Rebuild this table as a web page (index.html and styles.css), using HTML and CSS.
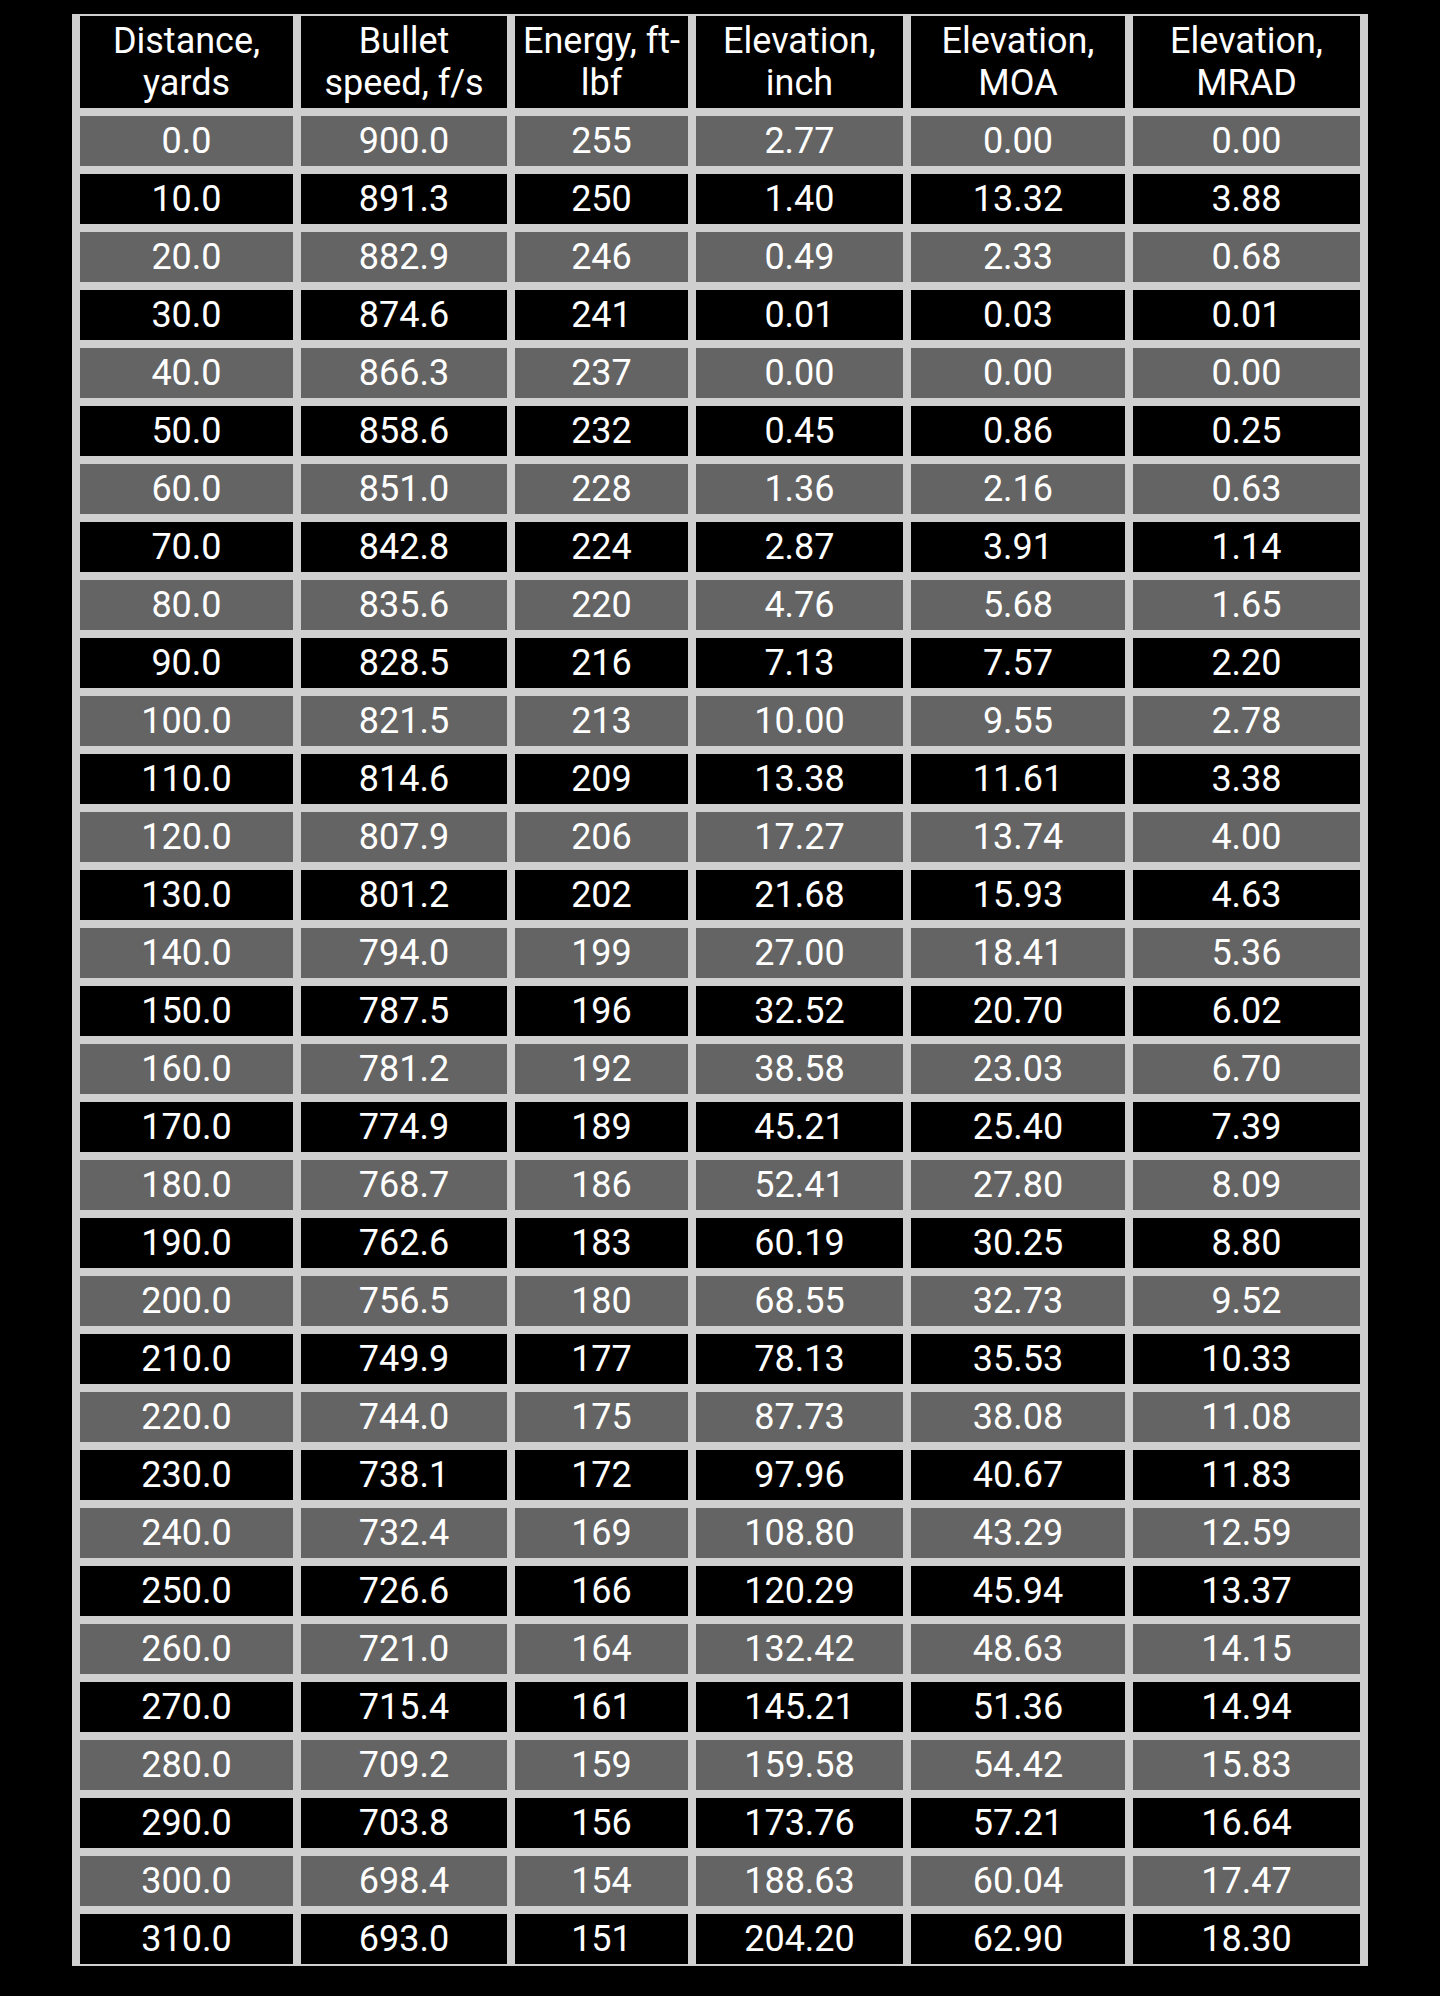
FILE: index.html
```html
<!DOCTYPE html>
<html lang="en">
<head>
<meta charset="utf-8">
<title>Ballistic table</title>
<link rel="stylesheet" href="styles.css">
</head>
<body>
<div class="table" id="table">
  <div class="cell head">Distance,<br>yards</div>
  <div class="cell head">Bullet<br>speed, f/s</div>
  <div class="cell head">Energy, ft-<br>lbf</div>
  <div class="cell head">Elevation,<br>inch</div>
  <div class="cell head">Elevation,<br>MOA</div>
  <div class="cell head">Elevation,<br>MRAD</div>
</div>
<script src="app.js"></script>
</body>
</html>
```
FILE: app.js
```js
const rows = [
["0.0","900.0","255","2.77","0.00","0.00"],
["10.0","891.3","250","1.40","13.32","3.88"],
["20.0","882.9","246","0.49","2.33","0.68"],
["30.0","874.6","241","0.01","0.03","0.01"],
["40.0","866.3","237","0.00","0.00","0.00"],
["50.0","858.6","232","0.45","0.86","0.25"],
["60.0","851.0","228","1.36","2.16","0.63"],
["70.0","842.8","224","2.87","3.91","1.14"],
["80.0","835.6","220","4.76","5.68","1.65"],
["90.0","828.5","216","7.13","7.57","2.20"],
["100.0","821.5","213","10.00","9.55","2.78"],
["110.0","814.6","209","13.38","11.61","3.38"],
["120.0","807.9","206","17.27","13.74","4.00"],
["130.0","801.2","202","21.68","15.93","4.63"],
["140.0","794.0","199","27.00","18.41","5.36"],
["150.0","787.5","196","32.52","20.70","6.02"],
["160.0","781.2","192","38.58","23.03","6.70"],
["170.0","774.9","189","45.21","25.40","7.39"],
["180.0","768.7","186","52.41","27.80","8.09"],
["190.0","762.6","183","60.19","30.25","8.80"],
["200.0","756.5","180","68.55","32.73","9.52"],
["210.0","749.9","177","78.13","35.53","10.33"],
["220.0","744.0","175","87.73","38.08","11.08"],
["230.0","738.1","172","97.96","40.67","11.83"],
["240.0","732.4","169","108.80","43.29","12.59"],
["250.0","726.6","166","120.29","45.94","13.37"],
["260.0","721.0","164","132.42","48.63","14.15"],
["270.0","715.4","161","145.21","51.36","14.94"],
["280.0","709.2","159","159.58","54.42","15.83"],
["290.0","703.8","156","173.76","57.21","16.64"],
["300.0","698.4","154","188.63","60.04","17.47"],
["310.0","693.0","151","204.20","62.90","18.30"]
];
const table = document.getElementById("table");
rows.forEach((r, i) => {
  r.forEach(v => {
    const d = document.createElement("div");
    d.className = "cell " + (i % 2 === 0 ? "even" : "odd");
    d.textContent = v;
    table.appendChild(d);
  });
});
```
FILE: styles.css
```css
html, body {
  margin: 0;
  padding: 0;
  background: #000;
}
body {
  font-family: Roboto, "Liberation Sans", sans-serif;
  color: #fff;
  padding-top: 14px;
  min-height: 1996px;
  box-sizing: border-box;
}
.table {
  width: 1296px;
  margin: 0 auto;
  box-sizing: border-box;
  display: grid;
  grid-template-columns: 213px 206px 173px 207px 214px 227px;
  gap: 8px;
  padding: 2px 8px;
  background: #cfcfcf;
}
.cell {
  font-size: 36px;
  line-height: 42px;
  padding: 4px 0;
  text-align: center;
  white-space: nowrap;
}
.head { background: #000; }
.even { background: #646464; }
.odd { background: #000; }
```
